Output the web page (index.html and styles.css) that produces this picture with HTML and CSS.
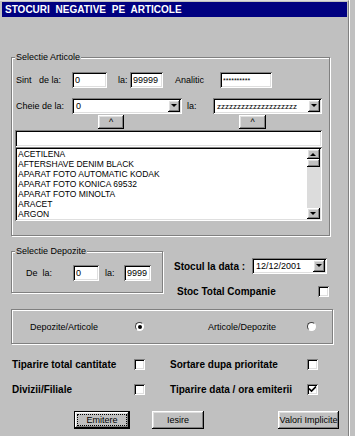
FILE: index.html
```html
<!DOCTYPE html>
<html lang="ro">

<head>
    <meta charset="UTF-8">
    <meta name="viewport" content="width=device-width, initial-scale=1.0">
    <title>Stocuri negative pe articole</title>
    <link rel="stylesheet" href="styles.css">
</head>

<body>
    <div class="dialog">
        <div class="titlebar">STOCURI NEGATIVE PE ARTICOLE</div>

        <fieldset class="group articole">
            <legend>Selectie Articole</legend>
            <div class="row row-sint">
                <span class="w-sint">Sint</span>
                <span class="w-dela">de la:</span>
                <input class="field f-sint1" type="text" value="0">
                <span class="w-la1">la:</span>
                <input class="field f-sint2" type="text" value="99999">
                <span class="w-analitic">Analitic</span>
                <input class="field f-analitic" type="text" value="**********">
            </div>
            <div class="row row-cheie">
                <span class="w-cheie">Cheie de la:</span>
                <div class="combo c-cheie1"><span class="combo-text">0</span><span class="drop"></span></div>
                <span class="w-la2">la:</span>
                <div class="combo c-cheie2"><span class="combo-text zz">zzzzzzzzzzzzzzzzzzzz</span><span class="drop"></span></div>
            </div>
            <div class="row row-up">
                <button class="btn up up1">^</button>
                <button class="btn up up2">^</button>
            </div>
            <input class="field search" type="text" value="">
            <div class="listbox">
                <div class="items">
                    <div>ACETILENA</div>
                    <div>AFTERSHAVE DENIM BLACK</div>
                    <div>APARAT FOTO AUTOMATIC KODAK</div>
                    <div>APARAT FOTO KONICA 69532</div>
                    <div>APARAT FOTO MINOLTA</div>
                    <div>ARACET</div>
                    <div>ARGON</div>
                </div>
                <div class="scrollbar">
                    <span class="sb-btn sb-up"></span>
                    <span class="sb-thumb"></span>
                    <span class="sb-track"></span>
                    <span class="sb-btn sb-down"></span>
                </div>
            </div>
        </fieldset>

        <div class="mid">
            <fieldset class="group depozite">
                <legend>Selectie Depozite</legend>
                <div class="row row-dep">
                    <span class="w-de">De&nbsp; la:</span>
                    <input class="field f-dep1" type="text" value="0">
                    <span class="w-la3">la:</span>
                    <input class="field f-dep2" type="text" value="9999">
                </div>
            </fieldset>
            <div class="stoc">
                <div class="row row-data">
                    <span class="bold w-data">Stocul la data :</span>
                    <div class="combo c-data"><span class="combo-text">12/12/2001</span><span class="drop"></span></div>
                </div>
                <div class="row row-total">
                    <span class="bold">Stoc Total Companie</span>
                    <span class="check"></span>
                </div>
            </div>
        </div>

        <div class="group radios">
            <span class="w-r1">Depozite/Articole</span>
            <span class="radio on"></span>
            <span class="w-r2">Articole/Depozite</span>
            <span class="radio"></span>
        </div>

        <div class="options">
            <div class="opt"><span class="bold">Tiparire total cantitate</span><span class="check"></span></div>
            <div class="opt"><span class="bold">Sortare dupa prioritate</span><span class="check"></span></div>
            <div class="opt"><span class="bold">Divizii/Filiale</span><span class="check"></span></div>
            <div class="opt">
                <span class="bold">Tiparire data / ora emiterii</span>
                <span class="check">
                    <svg width="7" height="7" viewBox="0 0 7 7"><path d="M0 2.5 L2.5 5 L7 0.5" fill="none" stroke="#000" stroke-width="1.6"/></svg>
                </span>
            </div>
        </div>

        <div class="buttons">
            <button class="btn btn-default b-emitere"><span class="focus">Emitere</span></button>
            <button class="btn b-iesire">Iesire</button>
            <button class="btn b-valori">Valori Implicite</button>
        </div>
    </div>
</body>

</html>
```

FILE: styles.css
```css
:root {
    --face: #c0c0c0;
    --shadow: #808080;
    --light: #dfdfdf;
    --navy: #000080;
    --sunken: inset 1px 1px 0 #808080, inset -1px -1px 0 #fff, inset 2px 2px 0 #000, inset -2px -2px 0 #dfdfdf;
    --raised: inset -1px -1px 0 #000, inset 1px 1px 0 #fff, inset -2px -2px 0 #808080, inset 2px 2px 0 #dfdfdf;
}

body {
    margin: 0;
    background: var(--face);
    font-family: 'Liberation Sans', Arial, sans-serif;
    font-size: 9px;
    color: #000;
}

.dialog {
    box-sizing: border-box;
    width: 349px;
    height: 436px;
    border-top: 1px solid var(--light);
    border-right: 1px solid var(--shadow);
    box-shadow: 1px 0 0 #fff;
    padding-top: 1px;
}

.titlebar {
    box-sizing: border-box;
    margin-left: 2px;
    width: 345px;
    height: 15px;
    line-height: 15px;
    padding-left: 3px;
    background: var(--navy);
    color: #fff;
    font-size: 10px;
    font-weight: bold;
    word-spacing: 3px;
}

/* group boxes */
.group {
    box-sizing: border-box;
    margin: 0;
    padding: 0 0 0 4px;
    min-width: 0;
    border: 1px solid var(--shadow);
    box-shadow: inset 1px 1px 0 #fff, 1px 1px 0 #fff;
}

legend {
    padding: 0 1px;
    margin-left: -1px;
    line-height: 11px;
    background: var(--face);
}

.row {
    display: flex;
    align-items: center;
}

.row > span {
    flex: none;
}

.bold {
    font-size: 10px;
    font-weight: bold;
}

/* fields */
.field {
    box-sizing: border-box;
    height: 16px;
    margin: 0;
    padding: 0 3px;
    border: 0;
    outline: none;
    background: #fff;
    box-shadow: var(--sunken);
    font: inherit;
    color: #000;
}

.combo {
    box-sizing: border-box;
    display: flex;
    align-items: center;
    height: 16px;
    padding: 2px;
    background: #fff;
    box-shadow: var(--sunken);
}

.combo-text {
    flex: 1;
    padding-left: 2px;
    white-space: nowrap;
    overflow: hidden;
}

.combo-text.zz {
    font-size: 8px;
}

.drop,
.sb-btn {
    position: relative;
    box-sizing: border-box;
    flex: none;
    width: 12px;
    height: 12px;
    background: var(--face);
    box-shadow: var(--raised);
}

.drop::after,
.sb-down::after,
.sb-up::after {
    content: '';
    position: absolute;
    left: 3px;
    top: 4px;
    border-left: 3px solid transparent;
    border-right: 3px solid transparent;
    border-top: 3px solid #000;
}

.sb-up::after {
    border-top: 0;
    border-bottom: 3px solid #000;
}

/* selectie articole */
.articole {
    margin: 35px 0 0 11px;
    width: 319px;
    padding-bottom: 14px;
}

.row-sint {
    margin-top: 9px;
    height: 16px;
}

.w-sint { width: 23px; }
.w-dela { width: 33px; }
.f-sint1 { width: 35px; }
.w-la1 { width: 12px; margin-left: 11px; }
.f-sint2 { width: 33px; }
.w-analitic { width: 45px; margin-left: 12px; }

.f-analitic {
    width: 52px;
    font-size: 7px;
}

.row-cheie {
    margin-top: 10px;
    height: 16px;
}

.w-cheie { width: 56px; }
.c-cheie1 { width: 110px; }
.w-la2 { width: 26px; margin-left: 5px; }
.c-cheie2 { width: 109px; }

.row-up {
    margin-top: 1px;
    height: 14px;
}

.btn {
    box-sizing: border-box;
    margin: 0;
    padding: 0;
    border: 0;
    background: var(--face);
    box-shadow: var(--raised);
    font: inherit;
    color: #000;
}

.up {
    height: 14px;
    line-height: 14px;
    font-size: 9px;
}

.up1 { width: 26px; margin-left: 82px; }
.up2 { width: 27px; margin-left: 115px; }

.search {
    display: block;
    margin: 1px 0 0 -1px;
    width: 307px;
    height: 17px;
}

.listbox {
    box-sizing: border-box;
    display: flex;
    margin-left: -1px;
    width: 307px;
    height: 74px;
    padding: 2px;
    background: #fff;
    box-shadow: var(--sunken);
}

.items {
    flex: 1;
    padding-left: 1px;
    font-size: 8.5px;
    line-height: 10px;
}

.scrollbar {
    display: flex;
    flex-direction: column;
    width: 13px;
}

.sb-btn {
    width: 13px;
    height: 10px;
}

.sb-down {
    height: 11px;
}

.sb-thumb {
    height: 8px;
    background: var(--face);
    box-shadow: var(--raised);
}

.sb-track {
    flex: 1;
    background: #dcdcdc;
}

/* depozite + stoc */
.mid {
    display: flex;
    align-items: flex-start;
    margin: 10px 0 0 11px;
}

.depozite {
    width: 152px;
    padding-bottom: 11px;
}

.row-dep {
    margin-top: 8px;
    height: 16px;
}

.w-de { width: 47px; margin-left: 10px; }
.f-dep1 { width: 26px; }
.w-la3 { width: 19px; margin-left: 6px; }
.f-dep2 { width: 27px; }

.stoc {
    width: 156px;
    margin-left: 11px;
}

.row-data {
    margin-top: 12px;
    height: 16px;
}

.w-data { width: 78px; }
.c-data { width: 75px; }

.row-total {
    justify-content: space-between;
    margin-top: 12px;
    padding: 0 1px 0 3px;
    height: 11px;
}

.check {
    box-sizing: border-box;
    display: flex;
    align-items: center;
    justify-content: center;
    flex: none;
    width: 11px;
    height: 11px;
    background: #fff;
    box-shadow: var(--sunken);
}

/* radio box */
.radios {
    display: flex;
    align-items: center;
    margin: 12px 0 0 11px;
    width: 322px;
    height: 35px;
    padding-left: 18px;
}

.w-r1 { width: 105px; }
.w-r2 { width: 99px; margin-left: 64px; }

.radio {
    position: relative;
    box-sizing: border-box;
    flex: none;
    width: 9px;
    height: 9px;
    border-radius: 50%;
    background: #fff;
    border: 1px solid;
    border-color: #404040 #fff #fff #404040;
}

.radio.on::after {
    content: '';
    position: absolute;
    left: 1.5px;
    top: 1.5px;
    width: 4px;
    height: 4px;
    border-radius: 50%;
    background: #000;
}

/* options */
.options {
    display: grid;
    grid-template-columns: 133px 148px;
    column-gap: 25px;
    row-gap: 14px;
    margin: 15px 0 0 12px;
}

.opt {
    display: flex;
    align-items: center;
    justify-content: space-between;
    height: 11px;
}

/* buttons */
.buttons {
    display: flex;
    margin-top: 16px;
}

.buttons .btn {
    height: 18px;
}

.btn-default {
    border: 1px solid #000;
    padding: 2px;
}

.focus {
    display: flex;
    align-items: center;
    justify-content: center;
    height: 100%;
    border: 1px dotted #000;
    box-sizing: border-box;
}

.b-emitere { width: 56px; margin-left: 74px; }
.b-iesire { width: 52px; margin-left: 22px; }
.b-valori { width: 61px; margin-left: 74px; }
```
